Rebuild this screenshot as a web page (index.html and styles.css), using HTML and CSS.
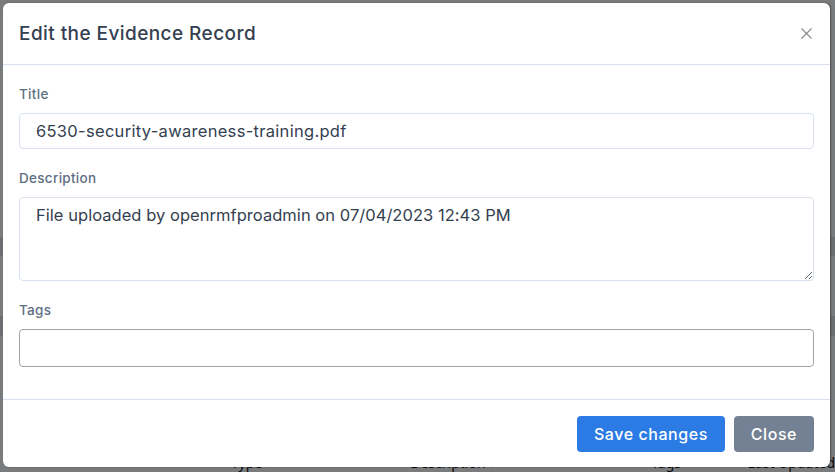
FILE: index.html
```html
<!DOCTYPE html>
<html lang="en">
<head>
<meta charset="utf-8">
<title>Edit the Evidence Record</title>
<link rel="stylesheet" href="styles.css">
</head>
<body>
<div class="page">
  <div class="page-top"></div>
  <div class="page-band"></div>
  <div class="page-band second"></div>
  <div class="page-head">
    <span class="col c-type">Type <span class="caret">▾</span></span>
    <span class="col c-desc">Description <span class="caret">▾</span></span>
    <span class="col c-tags">Tags <span class="caret">▾</span></span>
    <span class="col c-last">Last Updated</span>
  </div>
</div>
<div class="overlay"></div>
<div class="modal" role="dialog">
  <div class="modal-header">
    <h5 class="modal-title">Edit the Evidence Record</h5>
    <button class="btn-close" aria-label="Close">
      <svg width="11" height="11" viewBox="0 0 11 11"><path d="M0.5 0.5 L10.5 10.5 M10.5 0.5 L0.5 10.5" stroke="#8c8c8c" stroke-width="1.2" fill="none"/></svg>
    </button>
  </div>
  <div class="modal-body">
    <label class="form-label">Title</label>
    <input class="form-control" type="text" value="6530-security-awareness-training.pdf">
    <label class="form-label">Description</label>
    <textarea class="form-control textarea">File uploaded by openrmfproadmin on 07/04/2023 12:43 PM</textarea>
    <label class="form-label">Tags</label>
    <input class="form-control tags" type="text" value="">
  </div>
  <div class="modal-footer">
    <button class="btn btn-primary">Save changes</button>
    <button class="btn btn-secondary">Close</button>
  </div>
</div>
</body>
</html>
```
FILE: styles.css
```css
html, body {
  margin: 0;
  padding: 0;
}
body {
  width: 835px;
  height: 472px;
  overflow: hidden;
  position: relative;
  font-family: "Inter", "Noto Sans", sans-serif;
  background: #f5f7fa;
}
.page {
  height: 472px;
  display: flex;
  flex-direction: column;
}
.page-top {
  height: 245px;
}
.page-band {
  height: 20px;
  background: #d9dde3;
  margin-bottom: 60px;
}
.page-band.second {
  margin-bottom: 112px;
}
.page-head {
  display: flex;
  height: 20px;
  font-size: 14px;
  color: #111;
  font-family: "Noto Sans", sans-serif;
  padding-top: 5px;
}
.col { white-space: nowrap; }
.c-type { margin-left: 231px; width: 186px; }
.c-desc { width: 250px; }
.c-tags { width: 100px; }
.caret { color: #999; font-size: 12px; }
.overlay {
  position: absolute;
  inset: 0;
  background: rgba(0, 0, 0, 0.5);
}
.modal {
  position: absolute;
  left: 3px;
  top: 3px;
  width: 827px;
  height: 464px;
  background: #fff;
  border-radius: 6px;
  display: flex;
  flex-direction: column;
  box-shadow: 1px 0 2px rgba(0,0,0,0.35);
}
.modal-header {
  height: 62px;
  box-sizing: border-box;
  border-bottom: 1px solid #d8e2ef;
  display: flex;
  align-items: center;
  justify-content: space-between;
  padding: 0 16px;
}
.modal-title {
  margin: 0;
  font-size: 19px;
  font-weight: 500;
  color: #344050;
  letter-spacing: 0.43px;
}
.btn-close {
  border: 0;
  background: none;
  padding: 0;
  width: 11px;
  height: 11px;
  margin-right: 2px;
  display: flex;
}
.modal-body {
  padding: 19px 16px 32px;
  display: flex;
  flex-direction: column;
}
.form-label {
  font-size: 13.5px;
  line-height: 20px;
  font-weight: 500;
  color: #5e6e82;
  margin-bottom: 9px;
  letter-spacing: 0.3px;
}
.form-control {
  box-sizing: border-box;
  font-family: "Inter", "Noto Sans", sans-serif;
  font-size: 16.5px;
  letter-spacing: 0.3px;
  color: #344050;
  border: 1px solid #d8e2ef;
  border-radius: 4px;
  padding: 0 16px;
  height: 36px;
  margin: 0 0 19px;
  outline: none;
  background: #fff;
}
.textarea {
  height: 84px;
  padding-top: 6px;
  line-height: 23px;
  letter-spacing: 0.04px;
  resize: vertical;
}
.form-control.tags {
  border-color: #a3a3a3;
  height: 38px;
  margin-bottom: 0;
}
.modal-footer {
  border-top: 1px solid #d8e2ef;
  display: flex;
  justify-content: flex-end;
  gap: 9px;
  padding: 16px 16px 0;
  flex: 1;
}
.btn {
  height: 36px;
  border: 0;
  border-radius: 4px;
  color: #fff;
  font-family: "Inter", "Noto Sans", sans-serif;
  font-size: 16px;
  font-weight: 500;
  letter-spacing: 0.55px;
  padding: 0 17px;
}
.btn-primary { background: #2c7be5; }
.btn-secondary { background: #748194; padding: 0 17px; }
```
